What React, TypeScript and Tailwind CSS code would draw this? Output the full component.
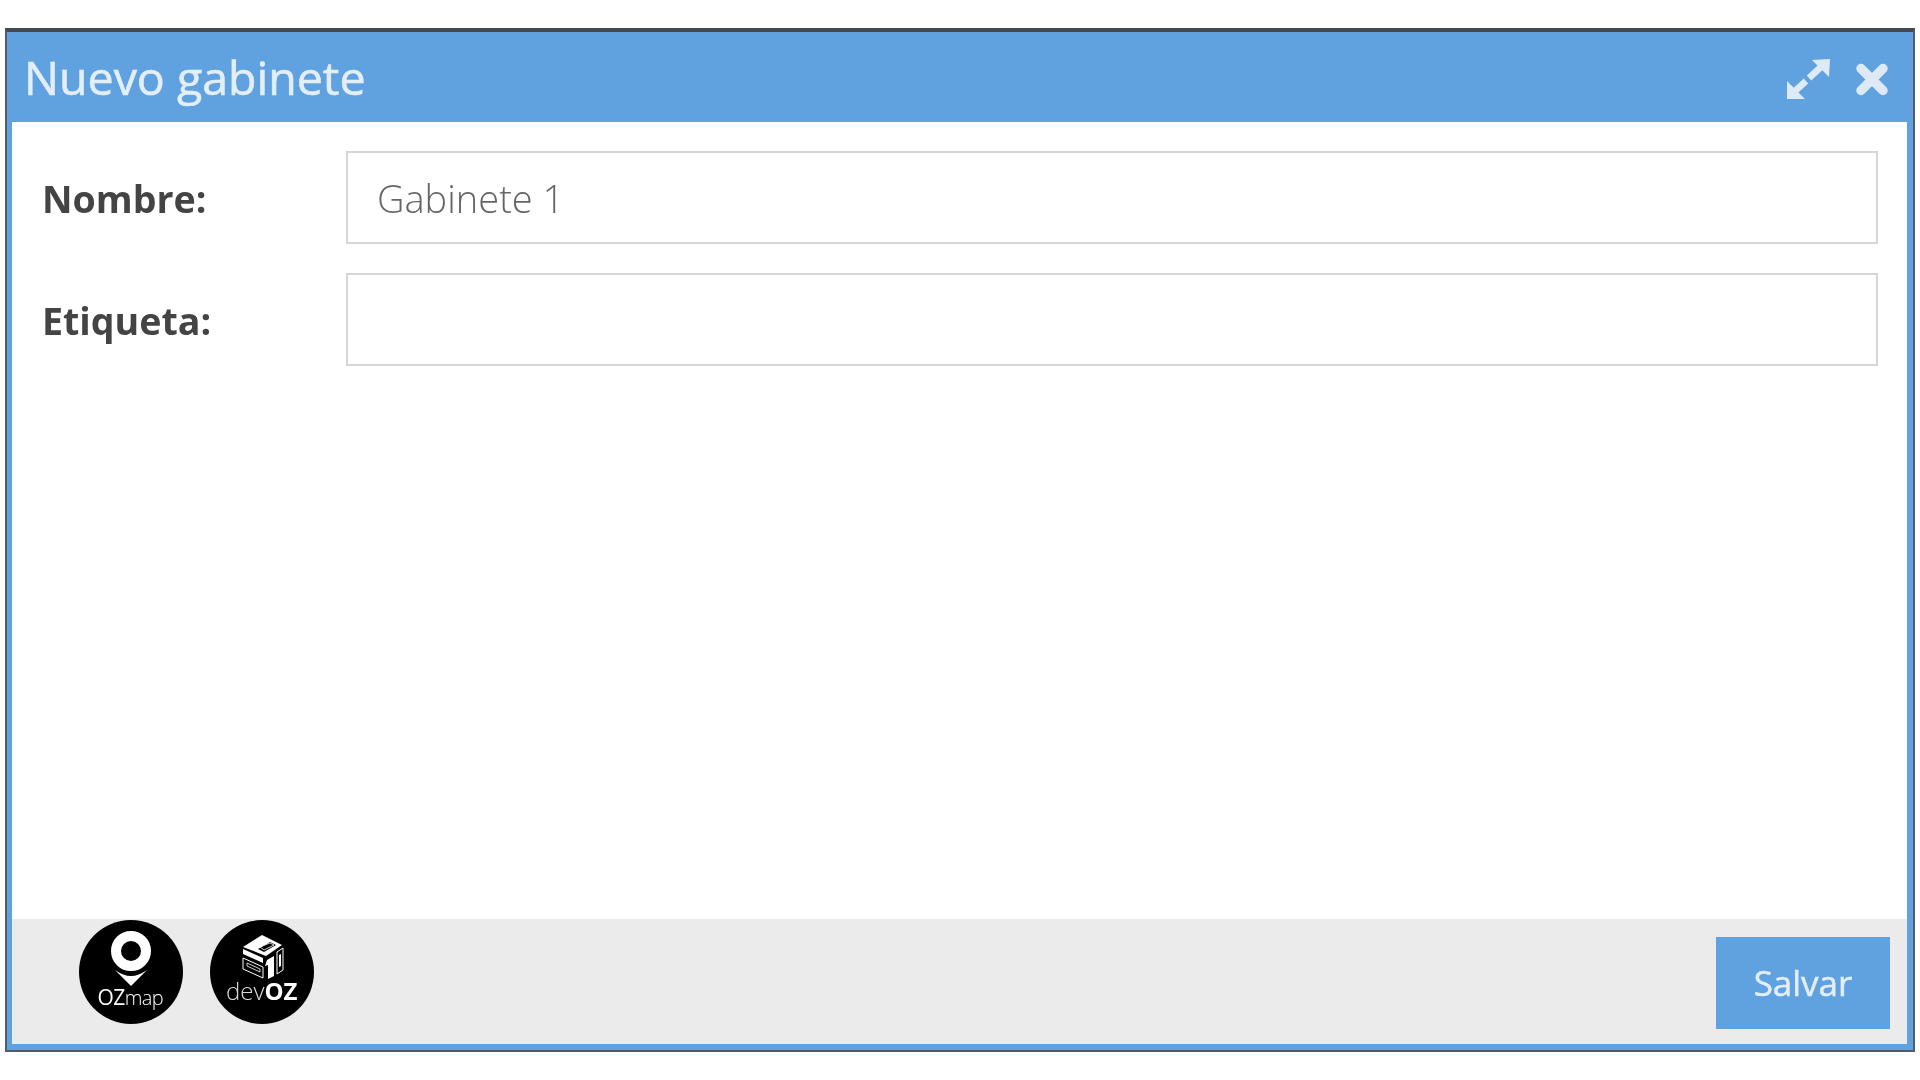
function OzMapLogo() {
  return (
    <svg viewBox="0 0 104 104" className="h-[104px] w-[104px] shrink-0 blur-[0.4px]">
      <circle cx="52" cy="52" r="52" fill="#000" />
      <circle cx="52" cy="31" r="15" fill="none" stroke="#fff" strokeWidth="10" />
      <path d="M36 50 Q44.5 56 52 56 Q59.5 56 68 50 L52 66 Z" fill="#fff" />
      <text x="18.5" y="85" fontFamily="'Open Sans', sans-serif" fontSize="21" fontWeight="500" fill="#fff" letterSpacing="-0.6">
        OZ
        <tspan fontWeight="300" fontSize="20">map</tspan>
      </text>
    </svg>
  );
}

function DevOzLogo() {
  return (
    <svg viewBox="0 0 104 104" className="h-[104px] w-[104px] shrink-0 blur-[0.4px]">
      <circle cx="52" cy="52" r="52" fill="#000" />
      <path d="M33 27 L52 15 L72 25 L56 36 Z" fill="#fff" />
      <path d="M48 29 L60 22 L66 25 L54 32 Z" fill="#000" />
      <path d="M50 27 L60 23 L64 25 L54 30 Z" fill="none" stroke="#fff" strokeWidth="0.8" />
      <path d="M33 29 L53 38 L53 43 L33 34 Z" fill="#fff" />
      <path d="M33 38 L53 47 L53 58 L33 49 Z" fill="none" stroke="#fff" strokeWidth="1" />
      <path d="M37 43 L50 49 L50 52 L37 46 Z" fill="none" stroke="#fff" strokeWidth="0.8" />
      <path d="M57 40 L64 36 L64 56 L58 59 L58 45 L55 46 Z" fill="#fff" />
      <path d="M67 32 L73 28 L73 50 L67 54 Z" fill="none" stroke="#fff" strokeWidth="1" />
      <path d="M69 35 L71 34 L71 46 L69 47 Z" fill="#fff" />
      <text x="16" y="80" fontFamily="'Open Sans', sans-serif" fontSize="24" fontWeight="300" fill="#ddd">
        dev
        <tspan fontWeight="700" fill="#fff">OZ</tspan>
      </text>
    </svg>
  );
}

function ExpandIcon() {
  return (
    <svg viewBox="0 0 44 42" className="h-[42px] w-[44px] blur-[0.5px]" fill="currentColor">
      <path d="M26 2 L44 1 L43 19 Z" />
      <path d="M36 8 L23 20" stroke="currentColor" strokeWidth="6.5" />
      <path d="M1 41 L19 41 L1 23 Z" />
      <path d="M8 34 L20 23" stroke="currentColor" strokeWidth="6.5" />
    </svg>
  );
}

function CloseIcon() {
  return (
    <svg viewBox="0 0 34 34" className="h-[35px] w-[34px] blur-[0.5px]" fill="none" stroke="currentColor" strokeWidth="9.5" strokeLinecap="round">
      <path d="M6 6 L28 28 M28 6 L6 28" />
    </svg>
  );
}

function Field({ label, value }: { label: string; value?: string }) {
  return (
    <div className="flex items-center">
      <label className="w-[334px] shrink-0 pl-[30px] pt-[4px] text-[37.6px] font-bold text-[#444444] blur-[0.5px]">{label}</label>
      <div className="mr-[29px] flex h-[93px] flex-1 items-center border-2 border-[#d6d6d6] bg-white pl-[29px] pt-[2px] text-[38px] font-light text-[#666666]">
        <span className="blur-[0.4px]">{value}</span>
      </div>
    </div>
  );
}

export default function App() {
  return (
    <div className="h-[1080px] w-[1920px] bg-white pl-[5px] pt-[28px] font-['Open_Sans',sans-serif]">
      <div className="flex h-[1024px] w-[1910px] flex-col border-x-2 border-b-2 border-t-4 border-x-[#555b62] border-b-[#555b62] border-t-[#444a50] bg-[#5fa2df]">
        <header className="flex h-[90px] shrink-0 items-center justify-between pl-[17px] pr-[24px]">
          <h1 className="text-[46.5px] font-normal leading-none text-[#e4eef7] blur-[0.5px] [-webkit-text-stroke:0.6px_#e4eef7]">Nuevo gabinete</h1>
          <div className="flex items-center gap-[25px] pt-[4px] text-[#deebf7]">
            <ExpandIcon />
            <CloseIcon />
          </div>
        </header>
        <main className="ml-[5px] mr-[6px] flex flex-1 flex-col gap-[29px] bg-white pt-[29px]">
          <Field label="Nombre:" value="Gabinete 1" />
          <Field label="Etiqueta:" />
        </main>
        <footer className="mb-[6px] ml-[5px] mr-[6px] flex h-[125px] shrink-0 items-start justify-between bg-[#ebebeb] pl-[67px] pr-[17px]">
          <div className="flex gap-[27px] pt-[1px]">
            <OzMapLogo />
            <DevOzLogo />
          </div>
          <button className="mt-[18px] flex h-[92px] w-[174px] items-center justify-center bg-[#5fa2df] text-[35px] font-normal text-[#e4eef7]">
            <span className="blur-[0.5px] [-webkit-text-stroke:0.5px_#e4eef7]">Salvar</span>
          </button>
        </footer>
      </div>
    </div>
  );
}
